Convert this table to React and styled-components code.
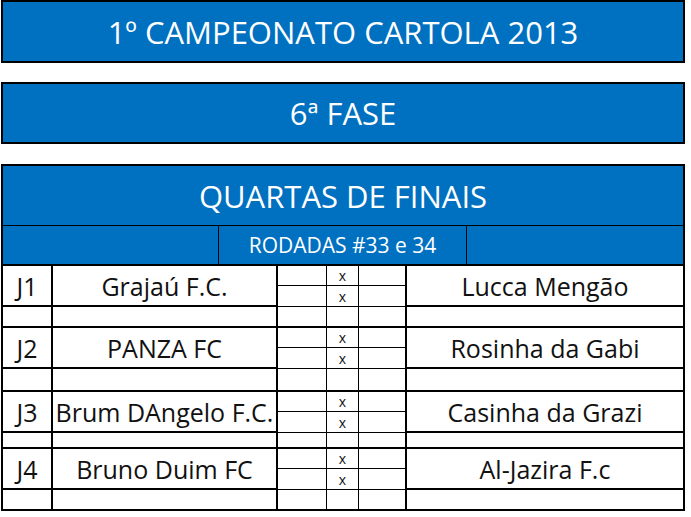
import React from 'react'
import styled, { createGlobalStyle } from 'styled-components'

const BLUE = '#0070c0'

const GlobalStyle = createGlobalStyle`
  html, body {
    margin: 0;
    padding: 0;
    background: #fff;
  }
  body {
    font-family: "Open Sans", Lato, sans-serif;
  }
`

const Page = styled.div`
  width: 684px;
  margin-left: 1px;
  display: flex;
  flex-direction: column;
`

const Banner = styled.div`
  box-sizing: border-box;
  height: ${props => props.$height}px;
  margin-bottom: ${props => props.$gap}px;
  background: ${BLUE};
  border: 2px solid #000;
  color: #fff;
  font-size: 31px;
  display: flex;
  align-items: center;
  justify-content: center;
`

const Board = styled.div`
  box-sizing: border-box;
  border: 2px solid #000;
  width: 684px;
`

const BoardTitle = styled.div`
  box-sizing: border-box;
  height: 60px;
  background: ${BLUE};
  border-bottom: 1px solid #000;
  color: #fff;
  font-size: 31px;
  display: flex;
  align-items: center;
  justify-content: center;
`

const RoundRow = styled.div`
  display: grid;
  grid-template-columns: 216px 248px 216px;
  height: 40px;
  box-sizing: border-box;
  border-bottom: 2px solid #000;
  background: ${BLUE};
`

const RoundCell = styled.div`
  box-sizing: border-box;
  border-right: ${props => (props.$last ? 'none' : '1px solid #000')};
  color: #fff;
  font-size: 21px;
  display: flex;
  align-items: center;
  justify-content: center;
`

const Grid = styled.div`
  display: grid;
  grid-template-columns: 50px 225px 49px 32px 48px 276px;
  grid-template-rows: ${props => props.$rows};
`

const line = w => (w ? `${w}px solid #000` : 'none')

const Cell = styled.div`
  box-sizing: border-box;
  grid-row: span ${props => props.$span || 1};
  border-right: ${props => line(props.$r)};
  border-bottom: ${props => line(props.$b)};
  display: flex;
  align-items: center;
  justify-content: center;
  color: #111;
  font-size: ${props => (props.$small ? '14px' : '25px')};
  white-space: nowrap;
  overflow: visible;
`

const matches = [
  { id: 'J1', home: 'Grajaú F.C.', away: 'Lucca Mengão', gap: 21 },
  { id: 'J2', home: 'PANZA FC', away: 'Rosinha da Gabi', gap: 23 },
  { id: 'J3', home: 'Brum DAngelo F.C.', away: 'Casinha da Grazi', gap: 16 },
  { id: 'J4', home: 'Bruno Duim FC', away: 'Al-Jazira F.c', gap: 19 }
]

const Match = ({ id, home, away, last }) => (
  <>
    <Cell $span={2} $r={2} $b={2}>{id}</Cell>
    <Cell $span={2} $r={2} $b={2}>{home}</Cell>
    <Cell $r={1} $b={1} />
    <Cell $r={1} $b={1} $small>x</Cell>
    <Cell $r={2} $b={1} />
    <Cell $span={2} $b={2}>{away}</Cell>
    <Cell $r={1} $b={1} />
    <Cell $r={1} $b={1} $small>x</Cell>
    <Cell $r={2} $b={1} />
    <Cell $r={2} $b={last ? 0 : 2} />
    <Cell $r={2} $b={last ? 0 : 2} />
    <Cell $r={1} $b={last ? 0 : 2} />
    <Cell $r={1} $b={last ? 0 : 2} />
    <Cell $r={2} $b={last ? 0 : 2} />
    <Cell $b={last ? 0 : 2} />
  </>
)

const App = () => {
  const rows = matches.map(m => `20px 21px ${m.gap}px`).join(' ')
  return (
    <>
      <GlobalStyle />
      <Page>
        <Banner $height={63} $gap={19}>1º CAMPEONATO CARTOLA 2013</Banner>
        <Banner $height={62} $gap={20}>6ª FASE</Banner>
        <Board>
          <BoardTitle>QUARTAS DE FINAIS</BoardTitle>
          <RoundRow>
            <RoundCell />
            <RoundCell>RODADAS #33 e 34</RoundCell>
            <RoundCell $last />
          </RoundRow>
          <Grid $rows={rows}>
            {matches.map((m, i) => (
              <Match key={m.id} {...m} last={i === matches.length - 1} />
            ))}
          </Grid>
        </Board>
      </Page>
    </>
  )
}

export default App
